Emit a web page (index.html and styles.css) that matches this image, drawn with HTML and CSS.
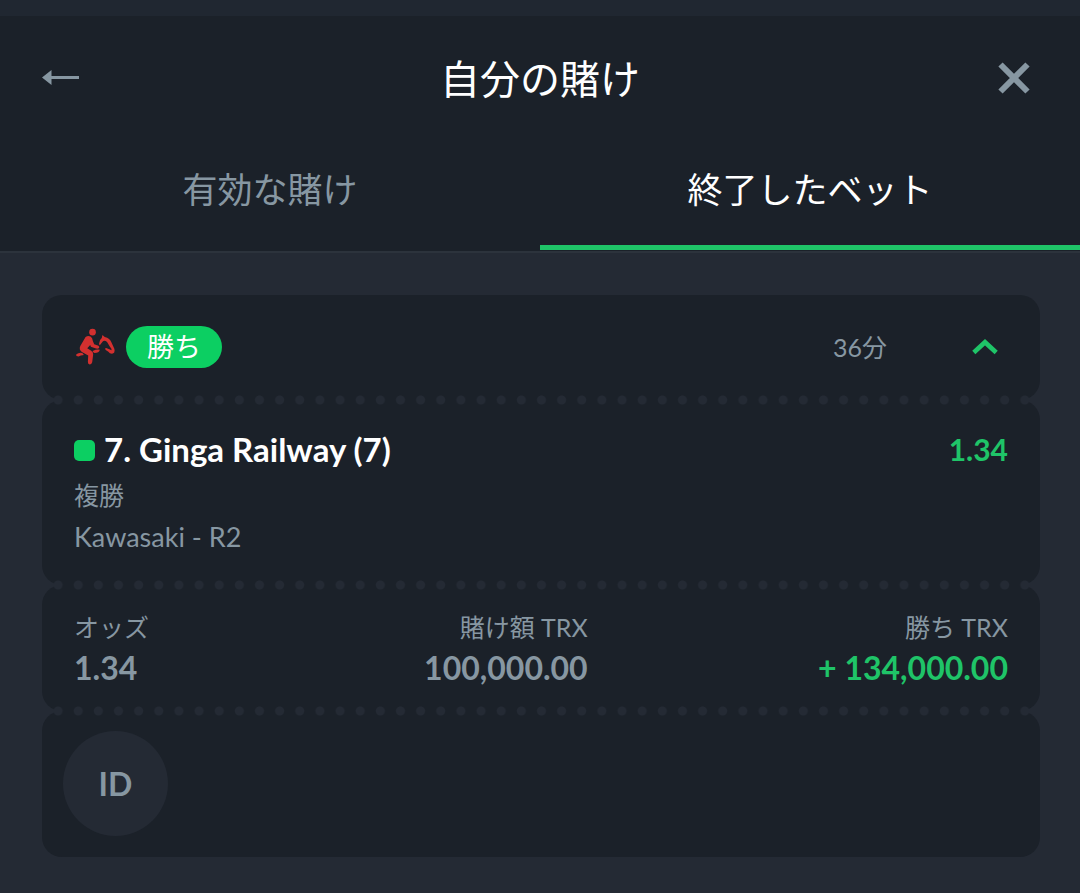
FILE: index.html
```html
<!DOCTYPE html>
<html lang="ja">
<head>
<meta charset="utf-8">
<meta name="viewport" content="width=device-width, initial-scale=1">
<title>自分の賭け</title>
<link rel="stylesheet" href="styles.css">
</head>
<body>
<main class="sheet">
  <header class="sheet-head">
    <div class="title-bar">
      <button class="icon-button" type="button" aria-label="戻る">
        <svg class="icon-back" viewBox="0 0 38 16" aria-hidden="true"><path d="M0 7.5 9.5 0V6H37V9H9.5V15Z" fill="currentColor"/></svg>
      </button>
      <h1 class="title">自分の賭け</h1>
      <button class="icon-button" type="button" aria-label="閉じる">
        <svg class="icon-close" viewBox="0 0 32 32" aria-hidden="true"><path d="M2.5 2.5 29.5 29.5M29.5 2.5 2.5 29.5" stroke="currentColor" stroke-width="6" fill="none"/></svg>
      </button>
    </div>
    <div class="tabs" role="tablist">
      <button class="tab" type="button" role="tab" aria-selected="false">有効な賭け</button>
      <button class="tab tab-active" type="button" role="tab" aria-selected="true">終了したベット</button>
    </div>
  </header>

  <article class="ticket">
    <section class="part part-head">
      <svg class="icon-racing" viewBox="0 0 118 114" aria-hidden="true">
        <g fill="currentColor">
          <circle cx="50" cy="12" r="10"/>
          <path d="M29 27Q36 21 44 25Q50 29 51 39L55 49L68 53Q73 57 69 61Q65 64 58 61L45 56L43 51L34 61L46 68Q53 73 52 80L49 103Q47 110 41 110Q35 109 36 102L37 83L18 72Q8 66 13 54Z"/>
          <path d="M1 79Q10 72 19 75L24 81Q13 82 8 86L1 84Z"/>
          <path d="M52 68Q62 63 72 65Q70 75 56 75L50 71Z"/>
          <path d="M70 49Q69 37 78 30L80 21L87 27Q103 31 107 43L116 62Q119 76 111 77Q102 78 98 71L90 66Q86 61 91 60L101 64L107 67Q109 62 103 57L94 42Q84 34 78 44L72 52Z"/>
        </g>
      </svg>
      <span class="badge">勝ち</span>
      <time class="age" datetime="PT36M">36分</time>
      <button class="toggle" type="button" aria-label="詳細を閉じる" aria-expanded="true">
        <svg class="icon-chevron" viewBox="0 0 26 16" aria-hidden="true"><path d="M1.8 13.5 13 3.2 24.2 13.5" stroke="currentColor" stroke-width="4.6" fill="none"/></svg>
      </button>
    </section>

    <section class="part part-pick">
      <div class="pick-row">
        <span class="marker"></span>
        <h2 class="pick-name">7. Ginga Railway (7)</h2>
        <span class="pick-odds">1.34</span>
      </div>
      <p class="detail">複勝</p>
      <p class="detail detail-race">Kawasaki - R2</p>
    </section>

    <section class="part">
      <dl class="stats">
        <div class="stat"><dt class="stat-label">オッズ</dt><dd class="stat-value">1.34</dd></div>
        <div class="stat stat-end"><dt class="stat-label">賭け額 TRX</dt><dd class="stat-value">100,000.00</dd></div>
        <div class="stat stat-end"><dt class="stat-label">勝ち TRX</dt><dd class="stat-value stat-win">+ 134,000.00</dd></div>
      </dl>
    </section>

    <section class="part part-foot">
      <button class="id-button" type="button">ID</button>
    </section>
  </article>
</main>
</body>
</html>
```

FILE: styles.css
```css
:root {
  --page: #242a34;
  --panel: #1b2129;
  --muted: #8797a2;
  --green: #1fc468;
}

* { box-sizing: border-box; }

body {
  margin: 0;
  background: var(--page);
  color: #fff;
  font-family: Lato, "Noto Sans CJK JP", sans-serif;
  font-size: 25px;
  line-height: 42px;
}

h1, h2, p, dl, dd { margin: 0; }

button {
  padding: 0;
  border: 0;
  background: none;
  color: inherit;
  font: inherit;
  cursor: pointer;
}

svg { display: block; }

.sheet {
  min-height: 100vh;
  border-top: 16px solid #202731;
}

.sheet-head {
  background: var(--panel);
  border-bottom: 2px solid #2c333c;
}

.title-bar {
  display: flex;
  align-items: center;
  justify-content: space-between;
  height: 124px;
  padding: 0 42px;
}

.icon-button {
  display: flex;
  align-items: center;
  width: 48px;
  height: 48px;
  color: var(--muted);
}

.icon-button:last-child {
  justify-content: flex-end;
  padding-right: 8px;
}

.icon-back { width: 38px; height: 16px; flex: none; }
.icon-close { width: 32px; height: 32px; flex: none; }

.title {
  padding-top: 2px;
  font-size: 40px;
  font-weight: 400;
  line-height: 60px;
}

.tabs {
  display: grid;
  grid-template-columns: 1fr 1fr;
  padding-bottom: 1px;
}

.tab {
  height: 110px;
  padding-bottom: 8px;
  border-bottom: 5px solid transparent;
  color: var(--muted);
  font-size: 35px;
  line-height: 52px;
}

.tab-active {
  border-color: var(--green);
  color: #fff;
}

.ticket { padding: 42px 40px 36px 42px; }

.part {
  position: relative;
  padding: 0 32px;
  border-radius: 20px;
  background: var(--panel);
}

/* Perforation between two parts of the ticket */
.part + .part::before {
  content: "";
  position: absolute;
  top: -5px;
  left: 6px;
  right: 5px;
  height: 10px;
  background: radial-gradient(circle, var(--page) 4px, transparent 5px) 0 0 / 20px 10px round;
}

.part-head {
  display: flex;
  align-items: center;
  height: 105px;
  padding-bottom: 2px;
}

.icon-racing {
  width: 39px;
  height: 38px;
  margin-left: 2px;
  color: #d3302f;
}

.badge {
  margin-left: 11px;
  padding: 0 21px;
  border-radius: 21px;
  background: #0ccf62;
  font-size: 27px;
}

.age {
  margin-left: auto;
  color: var(--muted);
}

.toggle {
  display: flex;
  justify-content: center;
  align-items: center;
  width: 46px;
  height: 42px;
  margin-left: 75px;
  color: var(--green);
}

.icon-chevron { width: 26px; height: 16px; }

.part-pick { padding-top: 28px; padding-bottom: 27px; }

.pick-row {
  display: flex;
  align-items: center;
  height: 44px;
  margin-bottom: 2px;
}

.marker {
  width: 21px;
  height: 21px;
  border-radius: 5px;
  background: #0ccf62;
}

.pick-name {
  margin-left: 9px;
  font-size: 33px;
  font-weight: 700;
  line-height: 44px;
}

.pick-odds {
  margin-left: auto;
  color: var(--green);
  font-size: 30px;
  font-weight: 700;
}

.pick-name,
.pick-odds { padding-bottom: 2px; }

.detail { color: var(--muted); }

.detail-race { font-size: 27px; }

.stats {
  display: grid;
  grid-template-columns: 10% 45% 45%;
  padding: 21px 0 23px;
  color: var(--muted);
}

.stat-end { text-align: right; }

.stat-label { white-space: nowrap; }

.stat-value {
  font-size: 32px;
  font-weight: 700;
  line-height: 40px;
}

.stat-win { color: var(--green); }

.part-foot { padding: 20px 21px 21px; }

.id-button {
  display: block;
  width: 105px;
  height: 105px;
  border-radius: 50%;
  background: var(--page);
  color: var(--muted);
  font-size: 32px;
  font-weight: 700;
}
```
